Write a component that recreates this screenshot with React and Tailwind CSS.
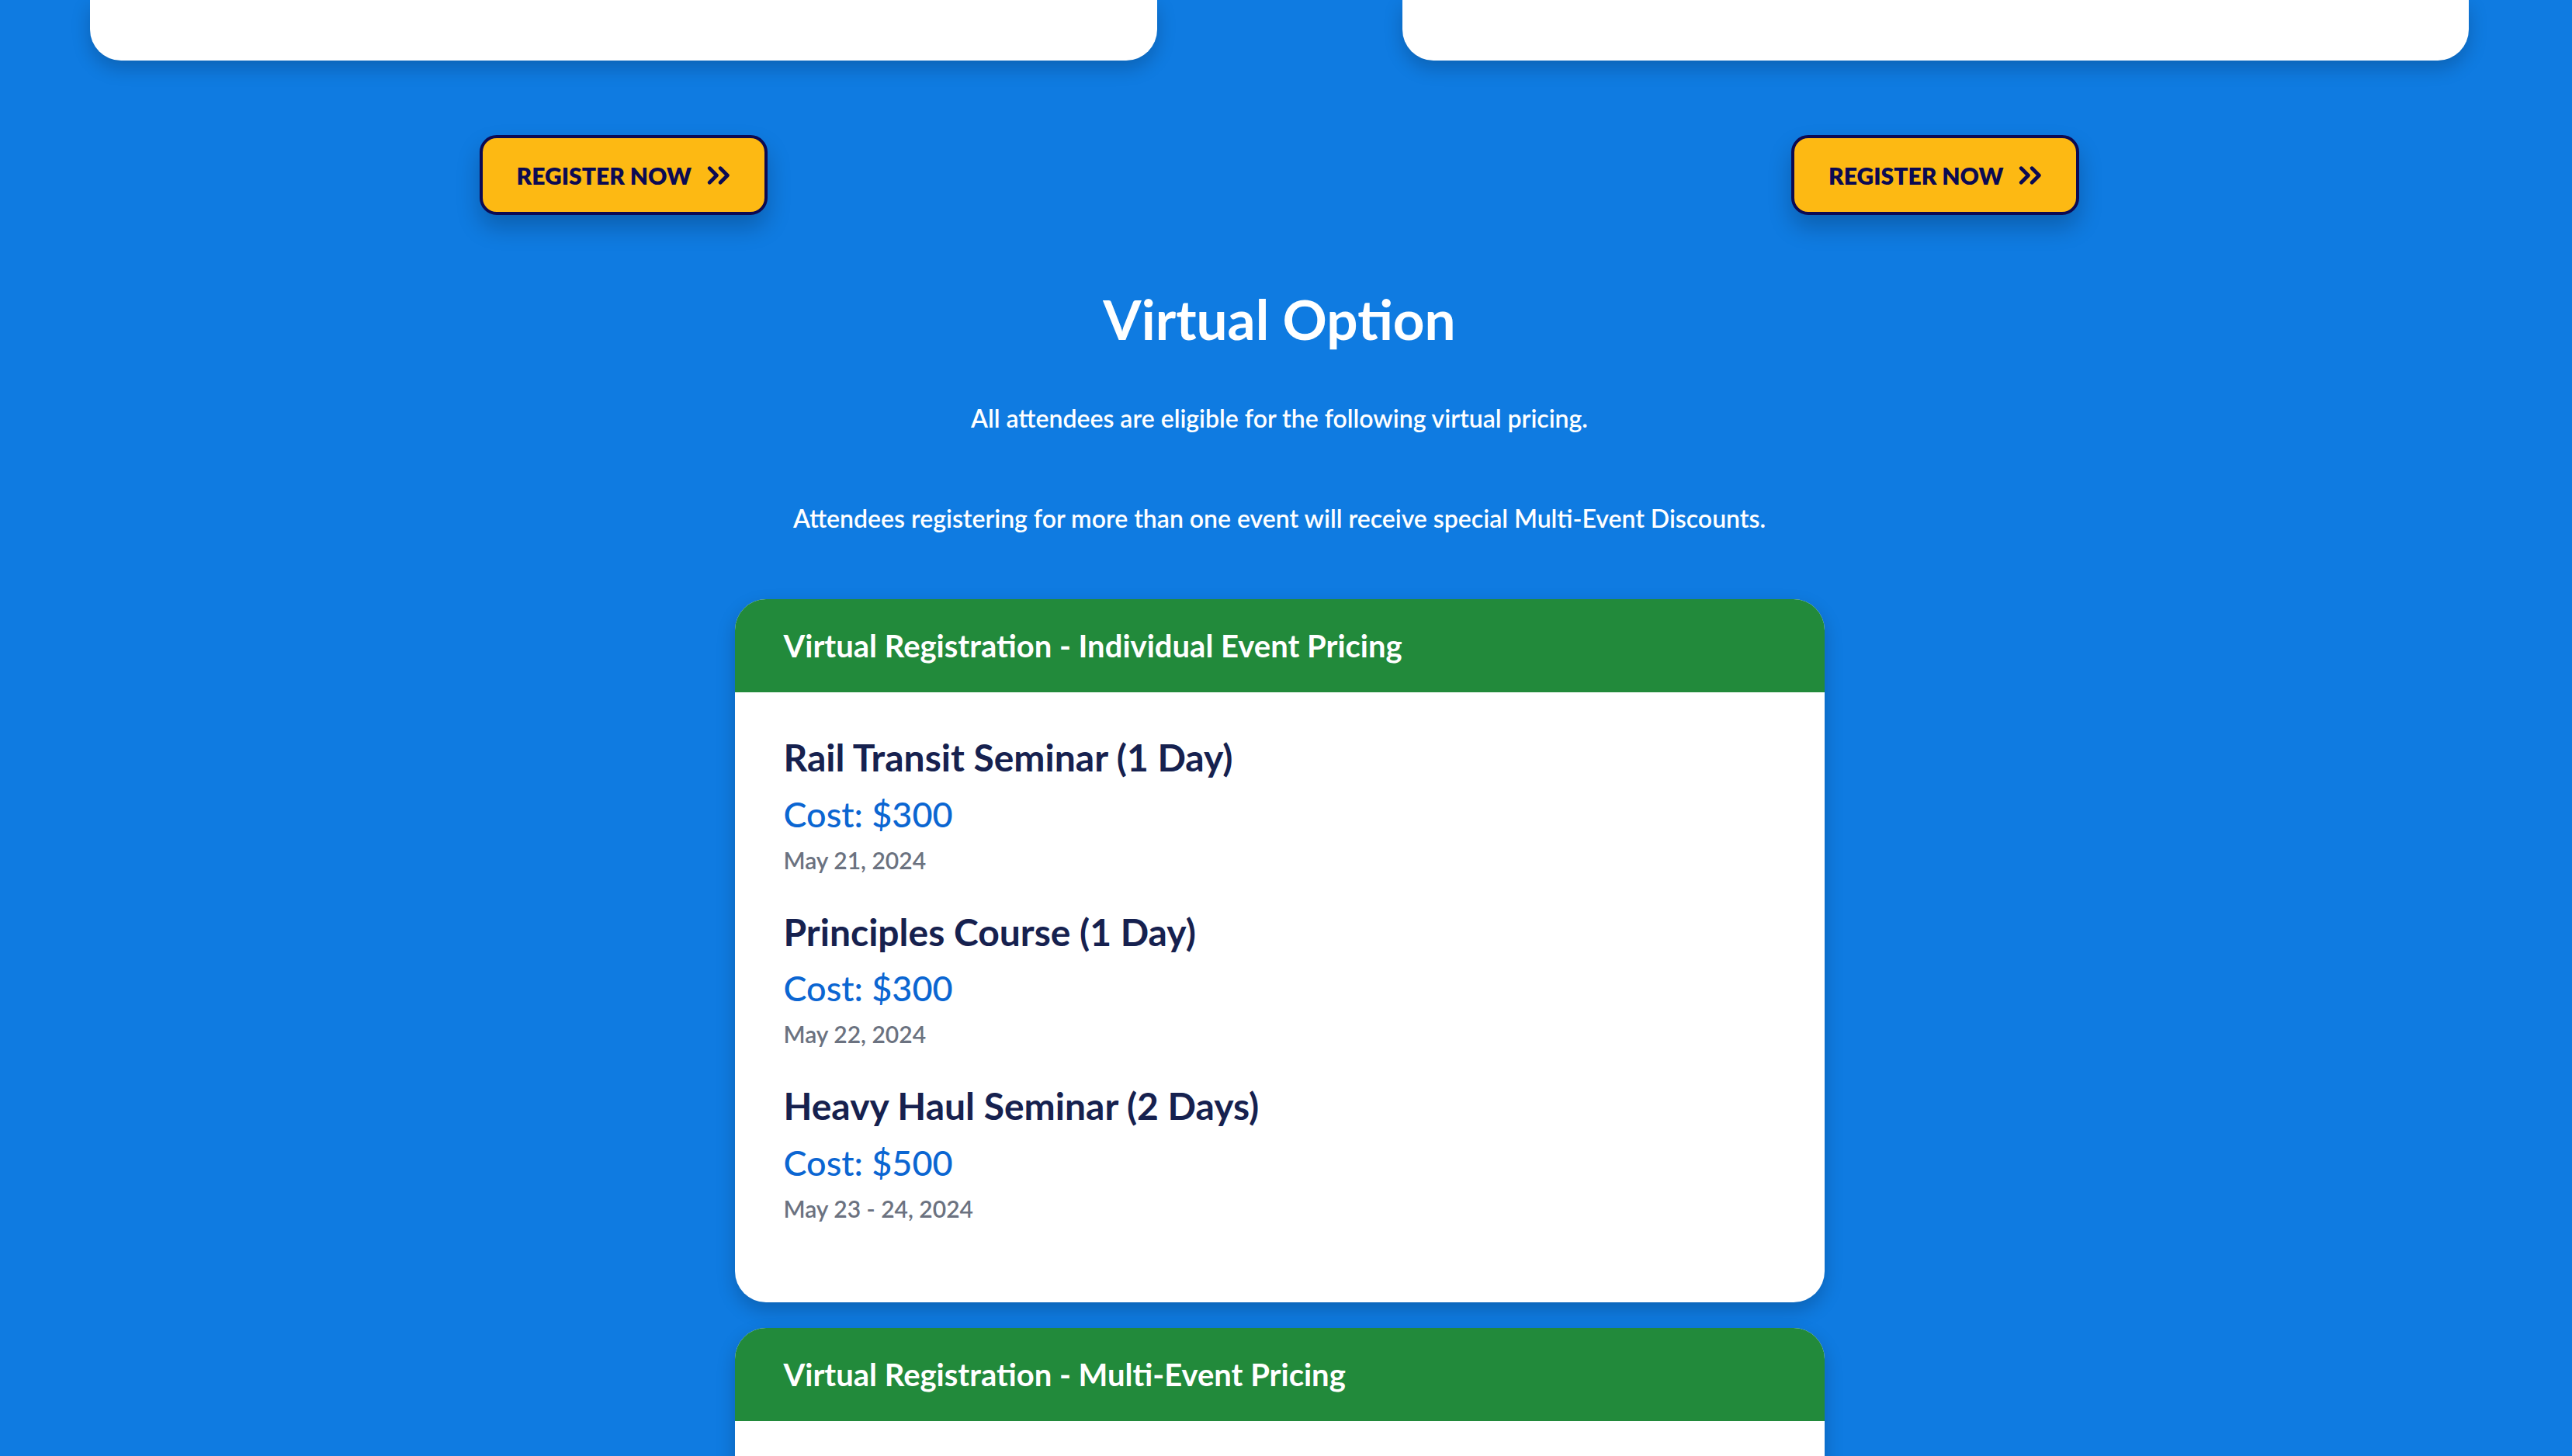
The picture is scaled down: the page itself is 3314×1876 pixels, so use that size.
import React from 'react';

const individualEvents = [
  { name: 'Rail Transit Seminar (1 Day)', cost: '$300', date: 'May 21, 2024' },
  { name: 'Principles Course (1 Day)', cost: '$300', date: 'May 22, 2024' },
  { name: 'Heavy Haul Seminar (2 Days)', cost: '$500', date: 'May 23 - 24, 2024' },
];

const ChevronsIcon = () => (
  <svg width="30" height="24" viewBox="0 0 14 11" fill="none" stroke="currentColor" strokeWidth="2.2" strokeLinecap="round" strokeLinejoin="round">
    <path d="M1.5 1.2 5.8 5.5 1.5 9.8" />
    <path d="M8 1.2 12.3 5.5 8 9.8" />
  </svg>
);

const RegisterButton = () => (
  <button className="flex h-[103px] w-[371px] items-center justify-center gap-[20px] rounded-[22px] border-4 border-[#0c0a52] bg-[#fdb913] text-[30px] font-extrabold uppercase leading-none text-[#0c0a52] shadow-[0_16px_30px_rgba(0,0,0,0.22)]">
    Register Now
    <ChevronsIcon />
  </button>
);

const PricingCard = ({ title, children }) => (
  <div className="mx-auto w-[1404px] overflow-hidden rounded-[40px] bg-white shadow-[0_10px_24px_rgba(0,0,0,0.2)]">
    <div className="flex h-[120px] items-center bg-[#228a3b] px-[63px]">
      <h3 className="text-[40px] font-bold leading-[1.2] text-white">{title}</h3>
    </div>
    {children}
  </div>
);

export default function App() {
  return (
    <div className="h-[1876px] overflow-hidden bg-[#0f7be1] pl-[116px] pr-[133px] font-[Lato,sans-serif]">
      {/* in-person cards, cut off above */}
      <div className="grid grid-cols-2 gap-[316px]">
        <div className="h-[78px] rounded-b-[40px] bg-white shadow-[0_10px_24px_rgba(0,0,0,0.2)]" />
        <div className="h-[78px] rounded-b-[40px] bg-white shadow-[0_10px_24px_rgba(0,0,0,0.2)]" />
      </div>

      <div className="mt-[96px] grid grid-cols-2 gap-[316px]">
        <div className="flex justify-center">
          <RegisterButton />
        </div>
        <div className="flex justify-center">
          <RegisterButton />
        </div>
      </div>

      <h2 className="mt-[91px] text-center text-[71px] font-bold leading-[1.2] text-white">Virtual Option</h2>
      <p className="mt-[67px] text-center text-[32px] font-semibold leading-[1.2] text-white">
        All attendees are eligible for the following virtual pricing.
      </p>
      <p className="mt-[90px] text-center text-[32px] font-semibold leading-[1.2] text-white">
        Attendees registering for more than one event will receive special Multi-Event Discounts.
      </p>

      <div className="mt-[85px] flex flex-col gap-[33px]">
        <PricingCard title="Virtual Registration - Individual Event Pricing">
          <div className="flex flex-col gap-[46px] px-[63px] pb-[103px] pt-[55px]">
            {individualEvents.map((ev) => (
              <div key={ev.name}>
                <h4 className="text-[48px] font-bold leading-[1.2] text-[#16214f]">{ev.name}</h4>
                <p className="mt-[17px] text-[45px] font-medium leading-[1.2] text-[#0b66d2]">Cost: {ev.cost}</p>
                <p className="mt-[14px] text-[30px] font-semibold leading-[1.2] text-[#6b7280]">{ev.date}</p>
              </div>
            ))}
          </div>
        </PricingCard>

        <PricingCard title="Virtual Registration - Multi-Event Pricing">
          <div className="h-[200px]" />
        </PricingCard>
      </div>
    </div>
  );
}
